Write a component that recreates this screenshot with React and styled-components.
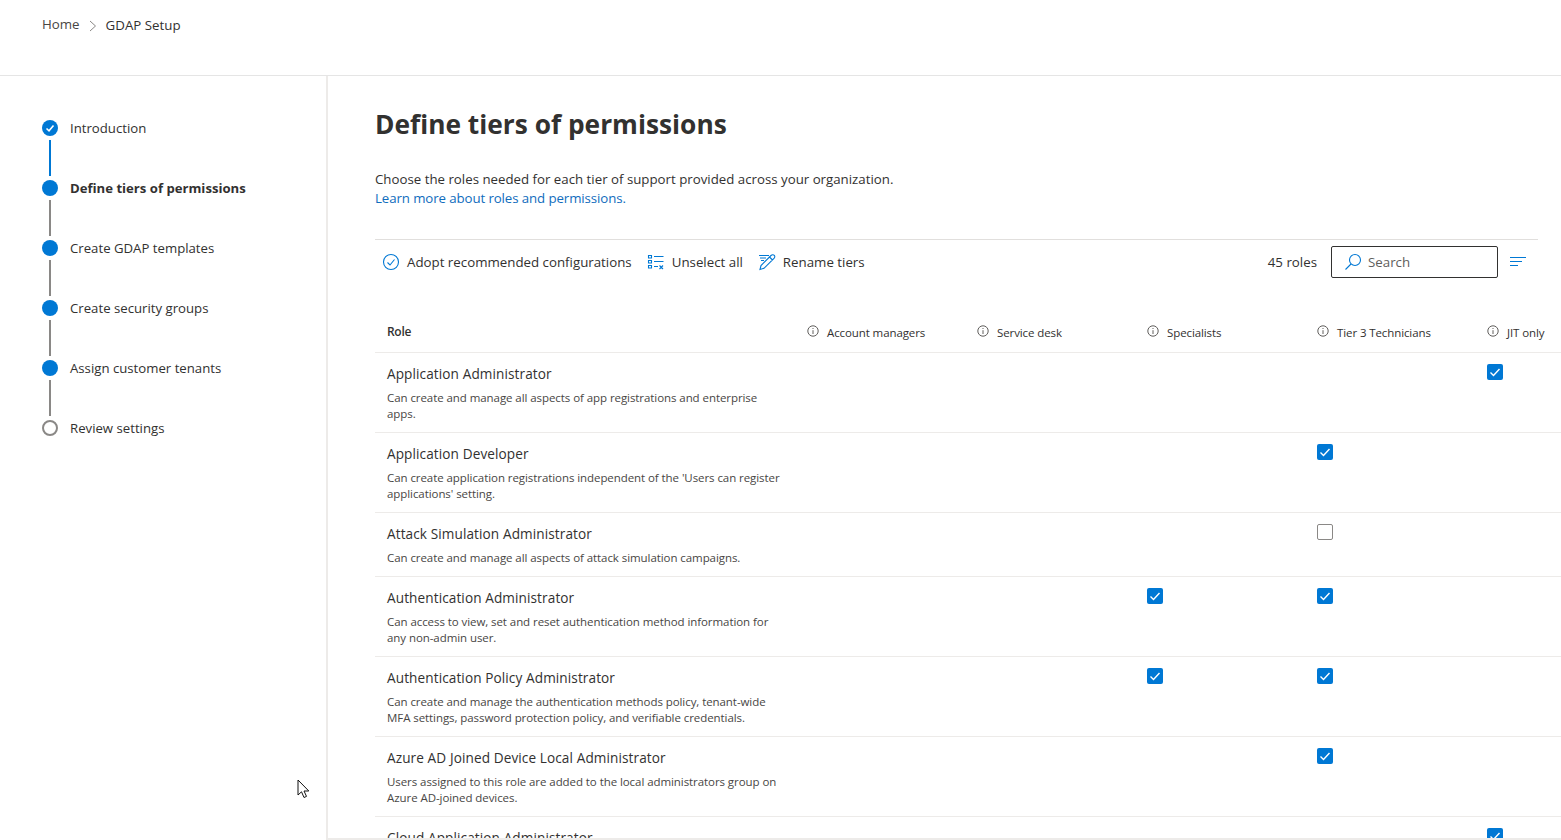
import styled, { createGlobalStyle } from 'styled-components';

const GlobalStyle = createGlobalStyle`
  html, body {
    margin: 0;
    height: 100%;
    overflow: hidden;
    background: #ffffff;
  }
  body {
    font-family: "Open Sans", "Noto Sans", sans-serif;
    font-size: 13.3px;
    color: #323130;
  }
`;

const Page = styled.div`
  position: relative;
  display: flex;
  flex-direction: column;
  height: 100vh;
  overflow: hidden;
`;

const Header = styled.header`
  display: flex;
  align-items: flex-start;
  gap: 8px;
  flex: 0 0 76px;
  box-sizing: border-box;
  padding: 15px 0 0 42px;
  border-bottom: 1px solid #e5e5e5;
  line-height: 18px;
`;

const Crumb = styled.span`
  color: ${(props) => (props.current ? '#323130' : '#484644')};
  margin-top: ${(props) => (props.current ? '1px' : '0')};
`;

const CrumbChevron = styled.svg`
  width: 8px;
  height: 12px;
  margin: 5px 1px 0;
  fill: none;
  stroke: #8a8886;
`;

const Body = styled.div`
  display: flex;
  flex: 1;
  min-height: 0;
`;

const Sidebar = styled.nav`
  flex: 0 0 328px;
  box-sizing: border-box;
  padding: 44px 0 0 42px;
  border-right: 2px solid #edebe9;
`;

const Step = styled.div`
  display: flex;
  align-items: center;
  gap: 12px;
  height: 16px;
  font-size: ${(props) => (props.active ? '13.15px' : '13.2px')};
  font-weight: ${(props) => (props.active ? 700 : 400)};
  white-space: nowrap;
`;

const Dot = styled.div`
  display: flex;
  align-items: center;
  justify-content: center;
  flex: 0 0 16px;
  height: 16px;
  box-sizing: border-box;
  border-radius: 50%;
  background: ${(props) => (props.empty ? '#ffffff' : '#0078d4')};
  border: ${(props) => (props.empty ? '2px solid #8a8886' : 'none')};
`;

const Connector = styled.div`
  width: 2px;
  height: 36px;
  margin: 4px 0 4px 7px;
  background: ${(props) => (props.done ? '#0078d4' : '#8a8886')};
`;

const Main = styled.main`
  flex: 1;
  min-width: 0;
  box-sizing: border-box;
  padding: 30px 23px 0 47px;
  overflow: hidden;
  border-bottom: 2px solid #edebe9;
`;

const Title = styled.h1`
  margin: 0;
  font-size: 26.3px;
  line-height: 36px;
  font-weight: 700;
  color: #323130;
`;

const Intro = styled.p`
  margin: 28px 0 0;
  font-size: 13.27px;
  line-height: 19px;
`;

const LearnLink = styled.a`
  color: #0f6cbd;
  letter-spacing: -0.1px;
  text-decoration: none;
`;

const Toolbar = styled.div`
  display: flex;
  align-items: center;
  height: 44px;
  margin-top: 31px;
  border-top: 1px solid #e1dfdd;
  padding: 0 12px 0 7px;
`;

const ToolButton = styled.button`
  display: flex;
  align-items: center;
  gap: 7px;
  margin-right: 15px;
  padding: 0;
  border: 0;
  background: none;
  font: inherit;
  color: #323130;
  white-space: nowrap;
`;

const ToolIcon = styled.svg`
  width: 18px;
  height: 18px;
  fill: none;
  stroke: #0078d4;
  stroke-width: 1.1;
`;

const Count = styled.span`
  margin-left: auto;
  margin-right: 14px;
`;

const SearchBox = styled.div`
  display: flex;
  align-items: center;
  gap: 6px;
  width: 167px;
  height: 32px;
  box-sizing: border-box;
  padding-left: 12px;
  border: 1px solid #323130;
  border-radius: 2px;
  color: #605e5c;
`;

const FilterIcon = styled.svg`
  width: 16px;
  height: 12px;
  margin-left: 12px;
  stroke: #0078d4;
  shape-rendering: crispEdges;
`;

const TableRow = styled.div`
  display: grid;
  grid-template-columns: 432px repeat(5, 170px);
  width: 1282px;
  min-height: ${(props) => (props.head ? '38px' : '0')};
  margin-top: ${(props) => (props.head ? '30px' : '0')};
  border-bottom: 1px solid #edebe9;
`;

const HeadRole = styled.div`
  padding: 10px 0 0 12px;
  font-size: 12px;
  line-height: 16px;
  font-weight: 600;
  letter-spacing: -0.3px;
`;

const HeadCell = styled.div`
  display: flex;
  gap: 8px;
  padding-top: 11px;
  font-size: 11.5px;
  line-height: 16px;
  letter-spacing: -0.1px;
  white-space: nowrap;
`;

const InfoIcon = styled.svg`
  flex: 0 0 12px;
  width: 12px;
  height: 12px;
  fill: none;
  stroke: #605e5c;
`;

const RoleCell = styled.div`
  padding: 11px 12px 10px;
`;

const RoleName = styled.div`
  font-size: 13.6px;
  line-height: 20px;
  letter-spacing: 0.1px;
  font-weight: 500;
`;

const RoleDesc = styled.div`
  margin-top: 6px;
  font-size: 11.5px;
  line-height: 16px;
  letter-spacing: -0.07px;
  color: #484644;
`;

const CheckCell = styled.div`
  padding-top: 11px;
`;

const Box = styled.div`
  display: flex;
  align-items: center;
  justify-content: center;
  width: 16px;
  height: 16px;
  box-sizing: border-box;
  border-radius: 2px;
  background: ${(props) => (props.checked ? '#0078d4' : '#ffffff')};
  border: ${(props) => (props.checked ? 'none' : '1px solid #8a8886')};
`;

const Cursor = styled.svg`
  position: absolute;
  left: 297px;
  top: 779px;
  width: 14px;
  height: 20px;
`;

const steps = [
  { label: 'Introduction', done: true },
  { label: 'Define tiers of permissions', active: true },
  { label: 'Create GDAP templates' },
  { label: 'Create security groups' },
  { label: 'Assign customer tenants' },
  { label: 'Review settings', empty: true },
];

const tiers = ['Account managers', 'Service desk', 'Specialists', 'Tier 3 Technicians', 'JIT only'];

// checks: [tier index, checked]
const roles = [
  {
    name: 'Application Administrator',
    desc: ['Can create and manage all aspects of app registrations and enterprise', 'apps.'],
    checks: [[4, true]],
  },
  {
    name: 'Application Developer',
    desc: ["Can create application registrations independent of the 'Users can register", "applications' setting."],
    checks: [[3, true]],
  },
  {
    name: 'Attack Simulation Administrator',
    desc: ['Can create and manage all aspects of attack simulation campaigns.'],
    checks: [[3, false]],
  },
  {
    name: 'Authentication Administrator',
    desc: ['Can access to view, set and reset authentication method information for', 'any non-admin user.'],
    checks: [[2, true], [3, true]],
  },
  {
    name: 'Authentication Policy Administrator',
    desc: ['Can create and manage the authentication methods policy, tenant-wide', 'MFA settings, password protection policy, and verifiable credentials.'],
    checks: [[2, true], [3, true]],
  },
  {
    name: 'Azure AD Joined Device Local Administrator',
    desc: ['Users assigned to this role are added to the local administrators group on', 'Azure AD-joined devices.'],
    checks: [[3, true]],
  },
  {
    name: 'Cloud Application Administrator',
    desc: ['Can create and manage all aspects of app registrations and enterprise apps except App Proxy.'],
    checks: [[4, true]],
  },
];

function Tick() {
  return (
    <svg width="12" height="12" viewBox="0 0 12 12" fill="none" stroke="#ffffff" strokeWidth="1.4">
      <path d="M1.5 6.5 L4.5 9.5 L10.5 3" />
    </svg>
  );
}

function Info() {
  return (
    <InfoIcon viewBox="0 0 12 12">
      <circle cx="6" cy="6" r="5.2" />
      <path d="M6 5.2 V9 M6 3 V4" />
    </InfoIcon>
  );
}

export default function App() {
  return (
    <Page>
      <GlobalStyle />
      <Header>
        <Crumb>Home</Crumb>
        <CrumbChevron viewBox="0 0 8 12">
          <path d="M1 1 L6.5 6 L1 11" />
        </CrumbChevron>
        <Crumb current>GDAP Setup</Crumb>
      </Header>
      <Body>
        <Sidebar>
          {steps.map((step, i) => (
            <div key={step.label}>
              <Step active={step.active}>
                <Dot empty={step.empty}>
                  {step.done && (
                    <svg width="10" height="10" viewBox="0 0 10 10" fill="none" stroke="#ffffff" strokeWidth="1.6">
                      <path d="M1.5 5.5 L4 7.8 L8.5 2.5" />
                    </svg>
                  )}
                </Dot>
                {step.label}
              </Step>
              {i < steps.length - 1 && <Connector done={step.done} />}
            </div>
          ))}
        </Sidebar>
        <Main>
          <Title>Define tiers of permissions</Title>
          <Intro>
            Choose the roles needed for each tier of support provided across your organization.
            <br />
            <LearnLink href="#">Learn more about roles and permissions.</LearnLink>
          </Intro>
          <Toolbar>
            <ToolButton>
              <ToolIcon viewBox="0 0 18 18">
                <circle cx="9" cy="9" r="7.5" />
                <path d="M5.5 9.5 L8 12 L12.5 6.5" />
              </ToolIcon>
              Adopt recommended configurations
            </ToolButton>
            <ToolButton>
              <ToolIcon viewBox="0 0 18 18">
                <path d="M1.5 2.5 H4.5 V5 H1.5 Z M1.5 7.5 H4.5 V10 H1.5 Z M1.5 12.5 H4.5 V15 H1.5 Z M7 3.5 H16.5 M7 8.5 H16.5 M7 13.5 H11 M12.5 12.5 L16 16 M16 12.5 L12.5 16" />
              </ToolIcon>
              Unselect all
            </ToolButton>
            <ToolButton>
              <ToolIcon viewBox="0 0 18 18">
                <path d="M1 2.5 H11 M2 5 H8 M3 7.5 H6 M2 16.5 L3 12.5 L13 2.5 C14 1.5 15.5 1.5 16.3 2.3 C17 3 17 4.3 16 5.3 L6 15.3 Z M11.5 4 L14.5 7" />
              </ToolIcon>
              Rename tiers
            </ToolButton>
            <Count>45 roles</Count>
            <SearchBox>
              <ToolIcon viewBox="0 0 18 18">
                <circle cx="11" cy="7" r="5.5" />
                <path d="M7 11 L1.5 16.5" />
              </ToolIcon>
              Search
            </SearchBox>
            <FilterIcon viewBox="0 0 16 12">
              <path d="M0 1.5 H16 M0 5.5 H12 M0 9.5 H8" />
            </FilterIcon>
          </Toolbar>
          <TableRow head>
            <HeadRole>Role</HeadRole>
            {tiers.map((tier) => (
              <HeadCell key={tier}>
                <Info />
                {tier}
              </HeadCell>
            ))}
          </TableRow>
          {roles.map((role) => (
            <TableRow key={role.name}>
              <RoleCell>
                <RoleName>{role.name}</RoleName>
                <RoleDesc>
                  {role.desc.map((line) => (
                    <div key={line}>{line}</div>
                  ))}
                </RoleDesc>
              </RoleCell>
              {tiers.map((tier, t) => {
                const check = role.checks.find(([idx]) => idx === t);
                return (
                  <CheckCell key={tier}>
                    {check && <Box checked={check[1]}>{check[1] && <Tick />}</Box>}
                  </CheckCell>
                );
              })}
            </TableRow>
          ))}
        </Main>
      </Body>
      <Cursor viewBox="0 0 14 20">
        <path d="M1 1 V16 L4.5 12.8 L7 18.5 L9.5 17.4 L7 12 H11.8 Z" fill="#ffffff" stroke="#111111" />
      </Cursor>
    </Page>
  );
}
